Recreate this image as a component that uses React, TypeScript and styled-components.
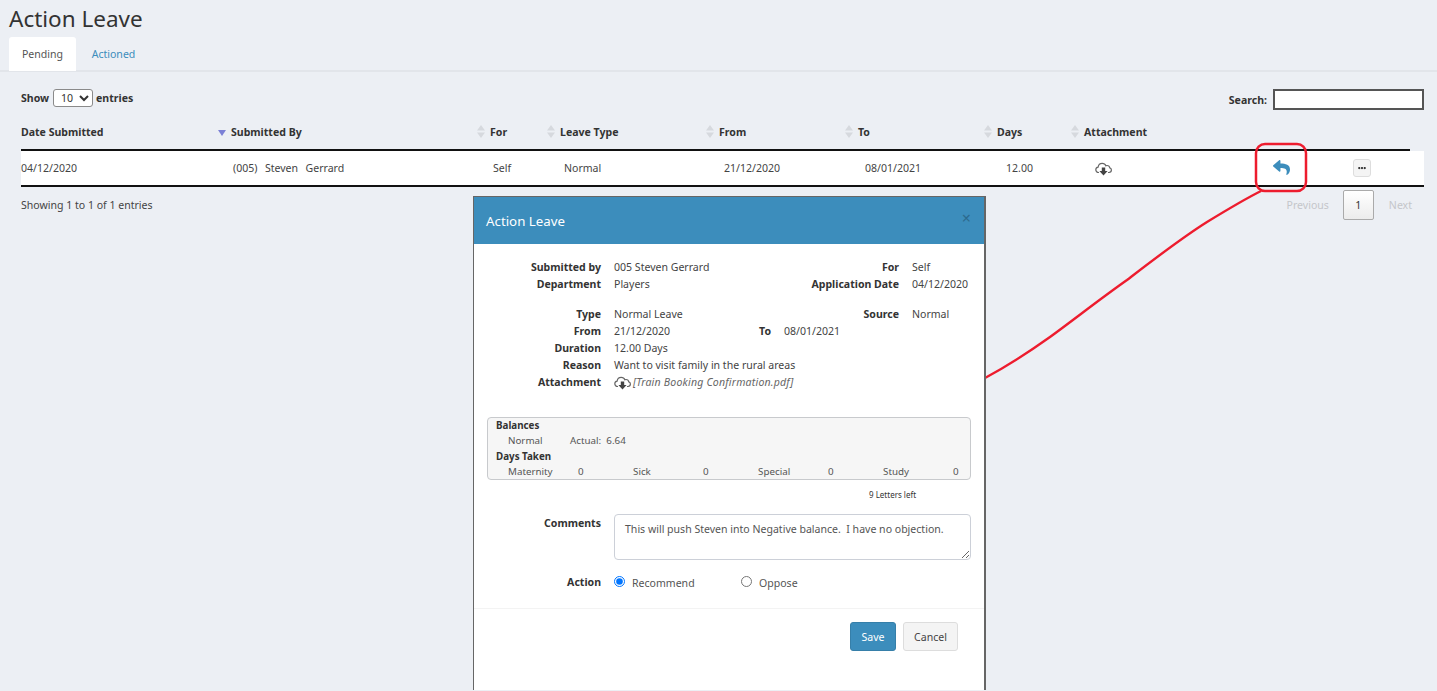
import React from 'react'
import styled, { createGlobalStyle } from 'styled-components'
import { FaReply, FaEllipsisH } from 'react-icons/fa'

const Global = createGlobalStyle`
  html, body { margin: 0; padding: 0; background: #eceff4; }
  body { font-family: 'Noto Sans', 'Liberation Sans', sans-serif; font-size: 10.55px; color: #444; overflow: hidden; }
  * { box-sizing: border-box; }
`

const Page = styled.div`
  position: relative;
  height: 691px;
  overflow: hidden;
`

const Title = styled.h1`
  margin: 0;
  padding: 6px 9px 0;
  height: 37px;
  font-size: 22.5px;
  line-height: 26px;
  font-weight: 400;
  color: #333;
`

const TabBar = styled.div`
  display: flex;
  padding-left: 9px;
  height: 35px;
  border-bottom: 2px solid #e2e5ea;
`

const Tab = styled.a<{ $active?: boolean }>`
  display: flex;
  align-items: center;
  justify-content: center;
  width: 67px;
  height: 34px;
  margin-right: 4px;
  border-radius: 3px 3px 0 0;
  background: ${(p) => (p.$active ? '#fff' : 'transparent')};
  color: ${(p) => (p.$active ? '#555' : '#3c8dbc')};
`

const Panel = styled.div`
  padding: 0 13px 0 21px;
`

const Toolbar = styled.div`
  display: flex;
  justify-content: space-between;
  align-items: flex-start;
  padding-top: 17px;
  height: 38px;
  font-weight: 700;
  color: #333;
`

const ToolGroup = styled.label`
  display: flex;
  align-items: center;
  gap: 3px;
`

const SizeSelect = styled.select`
  width: 40px;
  height: 18px;
  margin-left: 1px;
  padding: 0 0 0 3px;
  font: inherit;
  font-weight: 400;
  color: #333;
  background: #fff;
  border: 1px solid #8a8a8a;
  border-radius: 3px;
`

const SearchInput = styled.input`
  width: 151px;
  height: 21px;
  margin-left: 3px;
  background: #fff;
  border: 2px solid #555;
  outline: none;
`

const HeadRow = styled.div`
  display: grid;
  grid-template-columns: 197px 259px 70px 159px 139px 139px 87px 1fr;
  align-items: center;
  width: 1389px;
  height: 41px;
  padding-top: 4px;
  border-bottom: 2px solid #111;
  font-weight: 700;
  color: #333;
`

const HeadCell = styled.div`
  display: flex;
  align-items: center;
  gap: 5px;
`

const SortIcon = styled.svg<{ $active?: boolean }>`
  width: 8px;
  height: 13px;
  flex: none;
  margin-top: ${(p) => (p.$active ? 6 : 0)}px;
`

const BodyRow = styled.div`
  display: grid;
  grid-template-columns: 212px 260px 71px 160px 141px 141px 89px 178px 80px 1fr;
  align-items: center;
  height: 36px;
  padding-bottom: 1px;
  background: #fff;
  border-bottom: 2px solid #111;
  color: #444;
`

const NameCell = styled.div`
  white-space: pre;
  word-spacing: 1px;
`

const DotsButton = styled.button`
  display: flex;
  align-items: center;
  justify-content: center;
  width: 18px;
  height: 18px;
  padding: 0;
  background: #f4f4f4;
  border: 1px solid #ddd;
  border-radius: 3px;
  color: #333;
  font-size: 8px;
`

const ReplyButton = styled.span`
  display: flex;
  color: #3c8dbc;
  font-size: 17px;
`

const IconCell = styled.div`
  display: flex;
  padding-top: 3px;
`

const FootRow = styled.div`
  display: flex;
  justify-content: space-between;
  align-items: center;
  height: 36px;
  color: #444;
`

const Pager = styled.div`
  display: flex;
  align-items: center;
  color: #c4c6ca;
`

const PagerLink = styled.span`
  padding: 0 12px;
`

const PagerCurrent = styled.span`
  display: flex;
  align-items: center;
  justify-content: center;
  width: 31px;
  height: 30px;
  margin: 0 3px 0 2px;
  color: #333;
  background: linear-gradient(#fff, #ececec);
  border: 1px solid #aaa;
  border-radius: 2px;
`

const Annotation = styled.svg`
  position: absolute;
  left: 0;
  top: 0;
  width: 1437px;
  height: 691px;
  pointer-events: none;
`

const Modal = styled.div`
  position: absolute;
  left: 473px;
  top: 196px;
  width: 513px;
  height: 494px;
  background: #fff;
  border: 1px solid #666;
  border-right-width: 2px;
  border-bottom: 0;
`

const ModalHeader = styled.div`
  display: flex;
  align-items: center;
  justify-content: space-between;
  height: 47px;
  padding: 0 13px 0 12px;
  background: #3c8dbc;
  color: #fff;
  font-size: 13.3px;
`

const CloseMark = styled.span`
  color: #2c6a8e;
  font-size: 16px;
  line-height: 16px;
  margin-top: -6px;
`

const InfoBlock = styled.div<{ $top: number }>`
  padding-top: ${(p) => p.$top}px;
`

const InfoRow = styled.div<{ $split?: boolean }>`
  display: grid;
  grid-template-columns: ${(p) => (p.$split ? '127px 119px 25px 1fr' : '127px 150px 122px 1fr')};
  column-gap: 13px;
  height: 17px;
  line-height: 17px;
  color: #444;
`

const InfoLabel = styled.div`
  text-align: right;
  font-weight: 700;
  color: #333;
  white-space: nowrap;
`

const InfoValue = styled.div`
  white-space: nowrap;
`

const FileLink = styled.span`
  grid-column: 2 / 4;
  display: flex;
  align-items: center;
  gap: 2px;
  letter-spacing: 0.2px;
  font-style: italic;
  color: #666;
`

const BalanceBox = styled.div`
  margin: 26px 13px 0;
  height: 63px;
  padding: 0 0 0 8px;
  background: #f6f6f6;
  border: 1px solid #c8cacd;
  border-radius: 4px;
  font-size: 9.8px;
  line-height: 15.3px;
`

const BalanceTitle = styled.div`
  font-weight: 700;
  color: #333;
`

const BalanceRow = styled.div`
  display: grid;
  grid-template-columns: repeat(4, 70px 55px);
  padding-left: 12px;
  color: #555;
`

const ActualCell = styled.div`
  margin-left: -8px;
  white-space: pre;
`

const LettersLeft = styled.div`
  height: 34px;
  padding: 7px 0 0 395px;
  font-size: 8px;
  line-height: 16px;
  color: #333;
`

const FormRow = styled.div`
  display: grid;
  grid-template-columns: 127px 357px;
  column-gap: 13px;
`

const CommentLabel = styled(InfoLabel)`
  padding-top: 2px;
`

const Comments = styled.textarea`
  display: block;
  width: 357px;
  height: 46px;
  padding: 6px 10px;
  font: inherit;
  line-height: 17px;
  color: #555;
  background: #fff;
  border: 1px solid #ccd0d8;
  border-radius: 4px;
  outline: none;
`

const ActionRow = styled(FormRow)`
  margin-top: 14px;
  height: 17px;
  line-height: 17px;
`

const RadioGroup = styled.div`
  display: grid;
  grid-template-columns: 127px 1fr;
  padding-top: 1px;
  color: #555;
`

const RadioLabel = styled.label`
  display: flex;
  align-items: center;
  gap: 7px;
`

const Radio = styled.input`
  width: 11px;
  height: 11px;
  margin: -4px 0 0;
`

const ModalFooter = styled.div`
  display: flex;
  justify-content: flex-end;
  gap: 7px;
  margin-top: 17px;
  padding: 13px 26px 0 0;
  border-top: 1px solid #f3f3f3;
`

const Button = styled.button<{ $primary?: boolean }>`
  height: 29px;
  width: ${(p) => (p.$primary ? 46 : 55)}px;
  padding: 0;
  font: inherit;
  color: ${(p) => (p.$primary ? '#fff' : '#444')};
  background: ${(p) => (p.$primary ? '#3c8dbc' : '#f4f4f4')};
  border: 1px solid ${(p) => (p.$primary ? '#367fa9' : '#ddd')};
  border-radius: 3px;
`

const CloudIcon = () => (
  <svg width="17" height="14" viewBox="0 0 17 14" fill="none">
    <path
      d="M4 10.5H3.6C2 10.5 .8 9.3 .8 7.8c0-1.4 1-2.5 2.3-2.7C3.4 3 5 1.3 7.2 1.3c1.7 0 3.1 1 3.7 2.5.4-.2.8-.3 1.2-.3 1.4 0 2.5 1 2.7 2.4 1 .3 1.6 1.2 1.6 2.2 0 1.4-1.1 2.4-2.4 2.4H13"
      stroke="#666"
      strokeWidth="1.2"
    />
    <path d="M6.8 5.6h3.4v3.4h2.4L8.5 13.4 4.4 9h2.4z" fill="#444" />
  </svg>
)

const SortBoth = () => (
  <SortIcon viewBox="0 0 8 13">
    <path d="M4 0l4 5.5H0zM4 13L0 7.5h8z" fill="#d6d9de" />
  </SortIcon>
)

const SortDown = () => (
  <SortIcon viewBox="0 0 8 13" $active>
    <path d="M0 2h8l-4 6z" fill="#7b80d6" />
  </SortIcon>
)

export default function App() {
  return (
    <Page>
      <Global />
      <Title>Action Leave</Title>
      <TabBar>
        <Tab $active>Pending</Tab>
        <Tab>Actioned</Tab>
      </TabBar>
      <Panel>
        <Toolbar>
          <ToolGroup>
            Show
            <SizeSelect defaultValue="10">
              <option>10</option>
              <option>25</option>
            </SizeSelect>
            entries
          </ToolGroup>
          <ToolGroup>
            Search:
            <SearchInput />
          </ToolGroup>
        </Toolbar>
        <HeadRow>
          <HeadCell>Date Submitted</HeadCell>
          <HeadCell><SortDown />Submitted By</HeadCell>
          <HeadCell><SortBoth />For</HeadCell>
          <HeadCell><SortBoth />Leave Type</HeadCell>
          <HeadCell><SortBoth />From</HeadCell>
          <HeadCell><SortBoth />To</HeadCell>
          <HeadCell><SortBoth />Days</HeadCell>
          <HeadCell><SortBoth />Attachment</HeadCell>
        </HeadRow>
        <BodyRow>
          <div>04/12/2020</div>
          <NameCell>(005)  Steven  Gerrard</NameCell>
          <div>Self</div>
          <div>Normal</div>
          <div>21/12/2020</div>
          <div>08/01/2021</div>
          <div>12.00</div>
          <IconCell><CloudIcon /></IconCell>
          <ReplyButton><FaReply /></ReplyButton>
          <DotsButton><FaEllipsisH /></DotsButton>
        </BodyRow>
        <FootRow>
          <div>Showing 1 to 1 of 1 entries</div>
          <Pager>
            <PagerLink>Previous</PagerLink>
            <PagerCurrent>1</PagerCurrent>
            <PagerLink>Next</PagerLink>
          </Pager>
        </FootRow>
      </Panel>

      <Annotation viewBox="0 0 1437 691" fill="none">
        <rect x="1256" y="144" width="50" height="47" rx="9" stroke="#ed1c2e" strokeWidth="2.5" />
        <path
          d="M985 378C1007 366 1029 352 1050 337C1076 318 1100 299 1127 280C1153 260 1180 239 1207 222C1225 211 1243 200 1261 191"
          stroke="#ed1c2e"
          strokeWidth="2.4"
        />
      </Annotation>

      <Modal>
        <ModalHeader>
          Action Leave
          <CloseMark>×</CloseMark>
        </ModalHeader>
        <InfoBlock $top={15}>
          <InfoRow>
            <InfoLabel>Submitted by</InfoLabel>
            <InfoValue>005 Steven Gerrard</InfoValue>
            <InfoLabel>For</InfoLabel>
            <InfoValue>Self</InfoValue>
          </InfoRow>
          <InfoRow>
            <InfoLabel>Department</InfoLabel>
            <InfoValue>Players</InfoValue>
            <InfoLabel>Application Date</InfoLabel>
            <InfoValue>04/12/2020</InfoValue>
          </InfoRow>
        </InfoBlock>
        <InfoBlock $top={13}>
          <InfoRow>
            <InfoLabel>Type</InfoLabel>
            <InfoValue>Normal Leave</InfoValue>
            <InfoLabel>Source</InfoLabel>
            <InfoValue>Normal</InfoValue>
          </InfoRow>
          <InfoRow $split>
            <InfoLabel>From</InfoLabel>
            <InfoValue>21/12/2020</InfoValue>
            <InfoLabel>To</InfoLabel>
            <InfoValue>08/01/2021</InfoValue>
          </InfoRow>
          <InfoRow>
            <InfoLabel>Duration</InfoLabel>
            <InfoValue>12.00 Days</InfoValue>
          </InfoRow>
          <InfoRow>
            <InfoLabel>Reason</InfoLabel>
            <InfoValue>Want to visit family in the rural areas</InfoValue>
          </InfoRow>
          <InfoRow>
            <InfoLabel>Attachment</InfoLabel>
            <FileLink>
              <CloudIcon />
              [Train Booking Confirmation.pdf]
            </FileLink>
          </InfoRow>
        </InfoBlock>
        <BalanceBox>
          <BalanceTitle>Balances</BalanceTitle>
          <BalanceRow>
            <div>Normal</div>
            <ActualCell>Actual:  6.64</ActualCell>
          </BalanceRow>
          <BalanceTitle>Days Taken</BalanceTitle>
          <BalanceRow>
            <div>Maternity</div>
            <div>0</div>
            <div>Sick</div>
            <div>0</div>
            <div>Special</div>
            <div>0</div>
            <div>Study</div>
            <div>0</div>
          </BalanceRow>
        </BalanceBox>
        <LettersLeft>9 Letters left</LettersLeft>
        <FormRow>
          <CommentLabel>Comments</CommentLabel>
          <Comments readOnly value="This will push Steven into Negative balance.  I have no objection." />
        </FormRow>
        <ActionRow>
          <InfoLabel>Action</InfoLabel>
          <RadioGroup>
            <RadioLabel>
              <Radio type="radio" name="action" defaultChecked />
              Recommend
            </RadioLabel>
            <RadioLabel>
              <Radio type="radio" name="action" />
              Oppose
            </RadioLabel>
          </RadioGroup>
        </ActionRow>
        <ModalFooter>
          <Button $primary>Save</Button>
          <Button>Cancel</Button>
        </ModalFooter>
      </Modal>
    </Page>
  )
}
